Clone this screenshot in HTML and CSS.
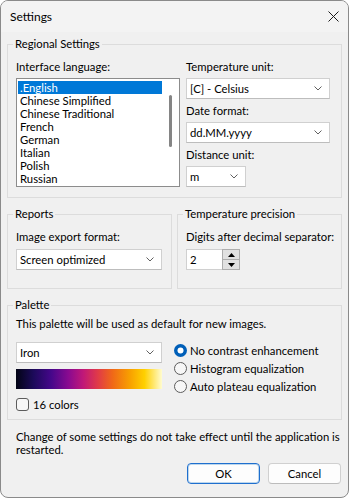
FILE: index.html
```html
<!DOCTYPE html>
<html lang="en">
<head>
    <meta charset="UTF-8">
    <title>Settings</title>
    <link rel="stylesheet" href="styles.css">
</head>
<body>
    <div class="window">
        <div class="titlebar">
            <span class="title">Settings</span>
            <svg class="close" width="11" height="11" viewBox="0 0 11 11">
                <path d="M0.5 0.5L10.5 10.5M10.5 0.5L0.5 10.5" stroke="#1b1b1b" stroke-width="1" fill="none"/>
            </svg>
        </div>

        <div class="content">
            <!-- regional -->
            <fieldset class="group">
                <legend>Regional Settings</legend>
                <div class="regional">
                    <div class="lang-col">
                        <div class="label">Interface language:</div>
                        <div class="listbox">
                            <ul class="items">
                                <li class="selected">.English</li>
                                <li>Chinese Simplified</li>
                                <li>Chinese Traditional</li>
                                <li>French</li>
                                <li>German</li>
                                <li>Italian</li>
                                <li>Polish</li>
                                <li>Russian</li>
                            </ul>
                            <div class="scrollbar"><div class="thumb"></div></div>
                        </div>
                    </div>
                    <div class="units-col">
                        <div class="label">Temperature unit:</div>
                        <div class="combo unit-combo">
                            <span>[C] - Celsius</span>
                            <svg class="chevron" width="8" height="5" viewBox="0 0 8 5"><path d="M0.5 0.5L4 4L7.5 0.5" stroke="#606060" fill="none"/></svg>
                        </div>
                        <div class="label">Date format:</div>
                        <div class="combo unit-combo">
                            <span>dd.MM.yyyy</span>
                            <svg class="chevron" width="8" height="5" viewBox="0 0 8 5"><path d="M0.5 0.5L4 4L7.5 0.5" stroke="#606060" fill="none"/></svg>
                        </div>
                        <div class="label">Distance unit:</div>
                        <div class="combo small-combo">
                            <span>m</span>
                            <svg class="chevron" width="8" height="5" viewBox="0 0 8 5"><path d="M0.5 0.5L4 4L7.5 0.5" stroke="#606060" fill="none"/></svg>
                        </div>
                    </div>
                </div>
            </fieldset>

            <!-- reports / precision -->
            <div class="group-row">
                <fieldset class="group half">
                    <legend>Reports</legend>
                    <div class="label first">Image export format:</div>
                    <div class="combo half-combo">
                        <span>Screen optimized</span>
                        <svg class="chevron" width="8" height="5" viewBox="0 0 8 5"><path d="M0.5 0.5L4 4L7.5 0.5" stroke="#606060" fill="none"/></svg>
                    </div>
                </fieldset>
                <fieldset class="group half">
                    <legend>Temperature precision</legend>
                    <div class="label first">Digits after decimal separator:</div>
                    <div class="spinner">
                        <div class="spin-text">2</div>
                        <div class="spin-btns">
                            <div class="spin-btn">
                                <svg width="7" height="4" viewBox="0 0 7 4"><path d="M3.5 0L7 4H0Z" fill="#000"/></svg>
                            </div>
                            <div class="spin-btn">
                                <svg width="7" height="4" viewBox="0 0 7 4"><path d="M0 0H7L3.5 4Z" fill="#000"/></svg>
                            </div>
                        </div>
                    </div>
                </fieldset>
            </div>

            <!-- palette -->
            <fieldset class="group palette">
                <legend>Palette</legend>
                <div class="desc">This palette will be used as default for new images.</div>
                <div class="palette-body">
                    <div class="palette-left">
                        <div class="combo half-combo">
                            <span>Iron</span>
                            <svg class="chevron" width="8" height="5" viewBox="0 0 8 5"><path d="M0.5 0.5L4 4L7.5 0.5" stroke="#606060" fill="none"/></svg>
                        </div>
                        <div class="gradient"></div>
                        <div class="check">
                            <span class="box"></span>
                            <span>16 colors</span>
                        </div>
                    </div>
                    <div class="radios">
                        <div class="radio">
                            <svg width="13" height="13" viewBox="0 0 13 13"><circle cx="6.5" cy="6.5" r="6.5" fill="#005fb8"/><circle cx="6.5" cy="6.5" r="3" fill="#fff"/></svg>
                            <span>No contrast enhancement</span>
                        </div>
                        <div class="radio">
                            <svg width="13" height="13" viewBox="0 0 13 13"><circle cx="6.5" cy="6.5" r="6" fill="#f7f7f7" stroke="#5c5c5c"/></svg>
                            <span>Histogram equalization</span>
                        </div>
                        <div class="radio">
                            <svg width="13" height="13" viewBox="0 0 13 13"><circle cx="6.5" cy="6.5" r="6" fill="#f7f7f7" stroke="#5c5c5c"/></svg>
                            <span>Auto plateau equalization</span>
                        </div>
                    </div>
                </div>
            </fieldset>

            <div class="note">Change of some settings do not take effect until the application is restarted.</div>

            <div class="buttons">
                <button class="btn default">OK</button>
                <button class="btn">Cancel</button>
            </div>
        </div>
    </div>
</body>
</html>
```
FILE: styles.css
```css
html, body {
    margin: 0;
    padding: 0;
    background: #ffffff;
}

body {
    font-family: Lato, "Liberation Sans", sans-serif;
    font-size: 11.3px;
    color: #000;
}

.window {
    width: 349px;
    height: 498px;
    box-sizing: border-box;
    border: 1px solid #8a8a8a;
    border-radius: 8px;
    background: #f0f0f0;
    overflow: hidden;
    display: flex;
    flex-direction: column;
}

.titlebar {
    height: 31px;
    display: flex;
    align-items: center;
    justify-content: space-between;
    padding: 0 9px 0 9px;
    background: #f3f3f3;
    font-size: 12px;
}

.close {
    margin-top: -1px;
}

.content {
    padding: 4px 6px 0 6px;
    display: flex;
    flex-direction: column;
}

/* group boxes */
.group {
    margin: 0;
    padding: 0 8px 10px 8px;
    border: 1px solid #dcdcdc;
    min-width: 0;
}

.group legend {
    line-height: 16px;
    padding: 0 2px;
    margin-left: -3px;
}

.label {
    line-height: 16px;
    margin-bottom: 3px;
    white-space: nowrap;
}

.regional {
    display: flex;
    gap: 6px;
    margin-top: 7px;
}

.lang-col {
    width: 164px;
}

.units-col {
    display: flex;
    flex-direction: column;
}

.units-col .combo {
    margin-bottom: 4px;
}

.units-col .combo:last-child {
    margin-bottom: 0;
}

/* list box */
.listbox {
    height: 109px;
    box-sizing: border-box;
    border: 1px solid #8c8c8c;
    background: #fff;
    display: flex;
}

.items {
    list-style: none;
    margin: 0;
    padding: 2px 0 0 1px;
    width: 144px;
}

.items li {
    height: 13px;
    line-height: 13px;
    padding-left: 2px;
    white-space: nowrap;
}

.items li.selected {
    background: #0078d7;
    color: #fff;
}

.scrollbar {
    flex: 1;
    padding: 16px 0 0 7px;
}

.thumb {
    width: 3px;
    height: 52px;
    border-radius: 2px;
    background: #858585;
}

/* combo boxes */
.combo {
    height: 21px;
    box-sizing: border-box;
    border: 1px solid #d0d0d0;
    border-bottom-color: #bdbdbd;
    background: #fff;
    display: flex;
    align-items: center;
    justify-content: space-between;
    padding: 0 7px 0 3px;
    white-space: nowrap;
}

.unit-combo {
    width: 144px;
}

.small-combo {
    width: 60px;
}

.half-combo {
    width: 146px;
}

/* reports / precision */
.group-row {
    display: flex;
    gap: 5px;
    margin-top: 8px;
}

.group.half {
    width: 165px;
    box-sizing: border-box;
    padding-bottom: 18px;
}

.label.first {
    margin-top: 7px;
    margin-bottom: 4px;
}

.spinner {
    display: flex;
    height: 21px;
    width: 54px;
}

.spin-text {
    width: 36px;
    box-sizing: border-box;
    border: 1px solid #d0d0d0;
    border-right: none;
    background: #fff;
    line-height: 19px;
    padding-left: 3px;
}

.spin-btns {
    width: 18px;
    display: flex;
    flex-direction: column;
    box-sizing: border-box;
    border: 1px solid #adadad;
    background: #e1e1e1;
}

.spin-btn {
    flex: 1;
    display: flex;
    align-items: center;
    justify-content: center;
}

.spin-btn + .spin-btn {
    border-top: 1px solid #adadad;
}

/* palette */
.group.palette {
    margin-top: 8px;
    padding-bottom: 7px;
}

.desc {
    line-height: 16px;
    margin-top: 3px;
    white-space: nowrap;
}

.palette-body {
    display: flex;
    gap: 12px;
    margin-top: 9px;
}

.palette-left {
    width: 146px;
    padding-top: 1px;
}

.gradient {
    height: 20px;
    margin-top: 6px;
    background: linear-gradient(to right,
        #020414 0%,
        #1c0a5a 12%,
        #45078a 24%,
        #8a0a90 36%,
        #c01878 46%,
        #e03a48 56%,
        #f06818 66%,
        #f8a000 78%,
        #ffd000 88%,
        #fffcd0 100%);
}

.check {
    display: flex;
    align-items: center;
    gap: 4px;
    height: 16px;
    margin-top: 7px;
}

.box {
    width: 13px;
    height: 13px;
    box-sizing: border-box;
    border: 1px solid #5c5c5c;
    border-radius: 3px;
    background: #f7f7f7;
}

.radio {
    display: flex;
    align-items: center;
    gap: 3px;
    height: 18px;
    white-space: nowrap;
}

.radio svg {
    flex: none;
}

/* footer */
.note {
    margin-top: 10px;
    padding-left: 9px;
    line-height: 13px;
}

.buttons {
    display: flex;
    justify-content: flex-end;
    gap: 8px;
    margin-top: 7px;
    margin-right: 1px;
}

.btn {
    width: 73px;
    height: 21px;
    box-sizing: border-box;
    border: 1px solid #d0d0d0;
    border-bottom-color: #bcbcbc;
    border-radius: 4px;
    background: #fdfdfd;
    font-family: inherit;
    font-size: inherit;
    color: #000;
    padding: 0;
}

.btn.default {
    border: 1px solid #1f6fce;
    box-shadow: inset 0 0 0 1px rgba(0, 103, 192, 0.25);
}
```
